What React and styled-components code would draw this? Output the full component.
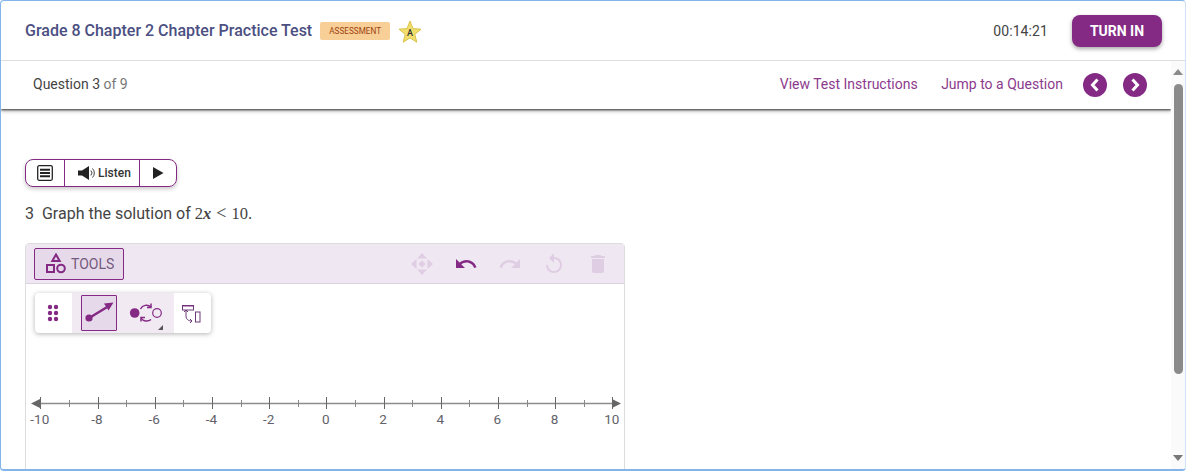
import React from "react";
import styled, { createGlobalStyle } from "styled-components";
import { MdUndo, MdRedo, MdReplay, MdDelete } from "react-icons/md";

const purple = "#842a85";

const Global = createGlobalStyle`
  html, body { margin: 0; padding: 0; background: #fff; overflow: hidden; }
  body { font-family: Roboto, "Liberation Sans", sans-serif; }
`;

const Frame = styled.div`
  box-sizing: border-box;
  width: 1186px;
  height: 471px;
  border: 1px solid #83b5ea;
  border-bottom-width: 2px;
  border-right-color: #cfe2f6;
  border-radius: 4px;
  display: flex;
  flex-direction: column;
  overflow: hidden;
  background: #fff;
`;

const TopBar = styled.header`
  flex: 0 0 59px;
  display: flex;
  align-items: center;
  padding: 0 23px 0 24px;
  border-bottom: 1px solid #dedede;
`;

const Title = styled.h1`
  margin: 0;
  font-size: 16px;
  font-weight: 500;
  color: #4b4f82;
`;

const Badge = styled.span`
  margin-left: 8px;
  width: 70px;
  height: 18px;
  display: flex;
  align-items: center;
  justify-content: center;
  background: #f7cf97;
  border-radius: 2px;
  color: #a0430f;
  font-size: 8.2px;
`;

const StarBox = styled.svg`
  margin-left: 8px;
  margin-top: 2px;
`;

const Timer = styled.span`
  margin-left: auto;
  font-size: 14px;
  color: #444;
  letter-spacing: 0.1px;
`;

const TurnIn = styled.button`
  margin-left: 24px;
  width: 90px;
  height: 32px;
  border: 0;
  border-radius: 8px;
  background: ${purple};
  color: #fff;
  font: 700 14px Roboto, sans-serif;
  box-shadow: 0 2px 4px rgba(0, 0, 0, 0.35);
`;

const Body = styled.div`
  flex: 1;
  display: flex;
  min-height: 0;
`;

const Main = styled.main`
  flex: 1;
  min-width: 0;
  display: flex;
  flex-direction: column;
`;

const SubBar = styled.div`
  box-sizing: border-box;
  flex: 0 0 48px;
  display: flex;
  align-items: center;
  padding: 0 23px 0 32px;
  box-shadow: 0 1px 2px #444, 0 2px 4px rgba(0, 0, 0, 0.3);
  clip-path: inset(0 0 -8px 0);
  position: relative;
`;

const Count = styled.span`
  font-size: 14px;
  color: #444;
  margin-bottom: 2px;
  span { color: #777; }
`;

const TextLink = styled.a`
  font-size: 14px;
  color: #8c3a8e;
  margin-bottom: 2px;
  margin-left: ${p => p.$gap}px;
`;

const RoundBtn = styled.span`
  width: 24px;
  height: 24px;
  border-radius: 50%;
  background: ${purple};
  margin-left: ${p => p.$gap}px;
  display: flex;
  align-items: center;
  justify-content: center;
`;

const Content = styled.div`
  flex: 1;
  min-height: 0;
  overflow: hidden;
  padding: 50px 0 0 24px;
`;

const ReadBar = styled.div`
  box-sizing: border-box;
  width: 152px;
  height: 28px;
  display: flex;
  align-items: stretch;
  border: 1px solid ${purple};
  border-radius: 8px;
  box-shadow: 0 2px 4px rgba(0, 0, 0, 0.22);
`;

const ReadCell = styled.div`
  box-sizing: border-box;
  width: ${p => p.$w}px;
  padding-left: ${p => p.$pad || 0}px;
  display: flex;
  align-items: center;
  justify-content: center;
  gap: 3px;
  font-size: 12px;
  font-weight: 500;
  color: #333;
  & + & { border-left: 1px solid ${purple}; }
`;

const QuestionText = styled.p`
  margin: 17px 0 0;
  height: 20px;
  font-size: 16px;
  line-height: 20px;
  color: #444;
  white-space: pre;
`;

const MathText = styled.span`
  font-family: "Liberation Serif", serif;
  font-size: 16.5px;
  line-height: 0;
  i { font-style: italic; font-weight: 700; }
  b { font-weight: 400; font-size: 18px; line-height: 0; margin: 0 5px; }
`;

const Graph = styled.section`
  box-sizing: border-box;
  width: 600px;
  height: 300px;
  margin-top: 19px;
  border: 1px solid #dcdcdc;
  border-radius: 4px 4px 0 0;
`;

const GraphHead = styled.div`
  box-sizing: border-box;
  height: 40px;
  padding: 4px 8px;
  display: flex;
  align-items: flex-start;
  background: #efe7f1;
  border-bottom: 1px solid #dccfe0;
`;

const ToolsBtn = styled.div`
  box-sizing: border-box;
  width: 90px;
  height: 32px;
  display: flex;
  align-items: center;
  gap: 5px;
  padding-left: 11px;
  background: #e6d9e9;
  border: 1px solid ${purple};
  border-radius: 2px;
  font-size: 14px;
  color: #755a80;
`;

const Actions = styled.div`
  margin-left: auto;
  height: 32px;
  display: flex;
  align-items: center;
  gap: 20px;
  padding-right: 6px;
`;

const ActionIcon = styled.span`
  width: 24px;
  height: 24px;
  display: flex;
  align-items: center;
  justify-content: center;
  font-size: 24px;
  color: ${p => (p.$on ? purple : "#dfcde4")};
`;

const Board = styled.div`
  position: relative;
  padding-top: 100px;
`;

const FloatTools = styled.div`
  position: absolute;
  left: 9px;
  top: 9px;
  width: 176px;
  height: 40px;
  display: flex;
  background: #fff;
  border-radius: 4px;
  box-shadow: 0 1px 5px rgba(0, 0, 0, 0.3);
`;

const ToolSlot = styled.div`
  box-sizing: border-box;
  width: ${p => p.$w}px;
  display: flex;
  align-items: center;
  padding-left: ${p => p.$pad}px;
  background: ${p => (p.$tint ? "#f1eaf3" : "transparent")};
`;

const ToolBtn = styled.div`
  position: relative;
  box-sizing: border-box;
  width: 36px;
  height: 36px;
  display: flex;
  align-items: center;
  justify-content: center;
  background: ${p => (p.$on ? "#e6d9e9" : "transparent")};
  border: 1px solid ${p => (p.$on ? purple : "transparent")};
  border-radius: 1px;
`;

const SwapIcon = styled.svg`
  margin-left: 11px;
`;

const CornerMark = styled.svg`
  align-self: flex-end;
  margin: 0 0 3px -6px;
`;

const LineSvg = styled.svg`
  display: block;
`;

const ScrollBar = styled.div`
  flex: 0 0 14px;
  background: #fafafa;
  display: flex;
  flex-direction: column;
  align-items: center;
  padding-top: 8px;
`;

const Thumb = styled.div`
  width: 9px;
  height: 290px;
  margin: 9px 0 81px;
  border-radius: 5px;
  background: #8a8a8a;
`;

function NumberLine() {
  const x0 = 14.3;
  const step = 28.6;
  const ticks = Array.from({ length: 21 }, (_, i) => i);
  return (
    <LineSvg width="598" height="60" viewBox="0 0 598 60">
      <line x1="12" x2="590" y1="19.5" y2="19.5" stroke="#8d8d8d" strokeWidth="1.5" />
      <path d="M5 19.5l9-4.5v9z" fill="#666" />
      <path d="M595 19.5l-9-4.5v9z" fill="#666" />
      {ticks.map(i => {
        const x = Math.round(x0 + i * step) + 0.5;
        const big = i % 2 === 0;
        return <line key={i} x1={x} x2={x} y1={big ? 13 : 16} y2={big ? 25 : 23} stroke={big ? "#666" : "#888"} strokeWidth="1" />;
      })}
      {ticks.filter(i => i % 2 === 0).map(i => (
        <text key={i} x={x0 + i * step - 0.5} y="40" textAnchor="middle" fontSize="13.5" fill="#62626a" fontFamily="Roboto, sans-serif">
          {i - 10}
        </text>
      ))}
    </LineSvg>
  );
}

export default function App() {
  return (
    <>
      <Global />
      <Frame>
        <TopBar>
          <Title>Grade 8 Chapter 2 Chapter Practice Test</Title>
          <Badge>ASSESSMENT</Badge>
          <StarBox width="24" height="23" viewBox="0 0 24 23">
            <path d="M12 1l3 7.600 8 .6-6.200 5.100 2 7.900L12 17.900 5.200 22.200l2-7.900L1 9.200l8-.6z" fill="#f2de6c" stroke="#d9c24a" strokeWidth="1" />
            <text x="12" y="16" textAnchor="middle" fontSize="9" fontWeight="500" fill="#333" fontFamily="Roboto, sans-serif">A</text>
          </StarBox>
          <Timer>00:14:21</Timer>
          <TurnIn>TURN IN</TurnIn>
        </TopBar>
        <Body>
          <Main>
            <SubBar>
              <Count>Question 3 <span>of 9</span></Count>
              <TextLink $gap={652}>View Test Instructions</TextLink>
              <TextLink $gap={23.5}>Jump to a Question</TextLink>
              <RoundBtn $gap={20.5}>
                <svg width="12" height="14" viewBox="0 0 12 14"><path d="M8.500 1.500L3.500 7l5 5.500" fill="none" stroke="#fff" strokeWidth="3" /></svg>
              </RoundBtn>
              <RoundBtn $gap={16}>
                <svg width="12" height="14" viewBox="0 0 12 14"><path d="M3.500 1.500L8.500 7l-5 5.500" fill="none" stroke="#fff" strokeWidth="3" /></svg>
              </RoundBtn>
            </SubBar>
            <Content>
              <ReadBar>
                <ReadCell $w={38}>
                  <svg width="16" height="16" viewBox="0 0 16 16">
                    <rect x="0.700" y="0.700" width="14.600" height="14.600" rx="1.500" fill="none" stroke="#222" strokeWidth="1.300" />
                    <path d="M3 4.800h10M3 8h10M3 11.200h10" stroke="#222" strokeWidth="2" />
                  </svg>
                </ReadCell>
                <ReadCell $w={75} $pad={5}>
                  <svg width="17" height="14" viewBox="0 0 17 14">
                    <path d="M0 4.500h4L11 0v14L4 9.500H0z" fill="#222" />
                    <path d="M12.800 4.500a3.500 3.500 0 0 1 0 5M14.500 2.500a6.500 6.500 0 0 1 0 9" fill="none" stroke="#444" strokeWidth="1" />
                  </svg>
                  Listen
                </ReadCell>
                <ReadCell $w={37}>
                  <svg width="12" height="12" viewBox="0 0 12 12"><path d="M1 0l10.500 6L1 12z" fill="#222" /></svg>
                </ReadCell>
              </ReadBar>
              <QuestionText>
                3  Graph the solution of <MathText>2<i>x</i><b>&lt;</b>10.</MathText>
              </QuestionText>
              <Graph>
                <GraphHead>
                  <ToolsBtn>
                    <svg width="20" height="22" viewBox="0 0 20 22" fill="none" stroke={purple} strokeWidth="2">
                      <path d="M10 1.500l3.700 6.500H6.300z" />
                      <rect x="1" y="12" width="7" height="7" />
                      <circle cx="15" cy="15.500" r="3.800" />
                    </svg>
                    TOOLS
                  </ToolsBtn>
                  <Actions>
                    <ActionIcon>
                      <svg width="22" height="22" viewBox="0 0 22 22" fill="#dfcde4">
                        <path d="M11 0l5 5.500H6zM11 22l-5-5.500h10zM0 11l5.500-5v10zM22 11l-5.500 5V6z" />
                        <path d="M11 7.500l3.500 3.500-3.500 3.500L7.500 11z" />
                      </svg>
                    </ActionIcon>
                    <ActionIcon $on><MdUndo /></ActionIcon>
                    <ActionIcon><MdRedo /></ActionIcon>
                    <ActionIcon><MdReplay /></ActionIcon>
                    <ActionIcon><MdDelete /></ActionIcon>
                  </Actions>
                </GraphHead>
                <Board>
                  <FloatTools>
                    <ToolSlot $w={37} $pad={0}>
                      <svg width="37" height="22" viewBox="0 0 37 22" fill={purple}>
                        <circle cx="15" cy="5" r="2.200" /><circle cx="21" cy="5" r="2.200" />
                        <circle cx="15" cy="11" r="2.200" /><circle cx="21" cy="11" r="2.200" />
                        <circle cx="15" cy="17" r="2.200" /><circle cx="21" cy="17" r="2.200" />
                      </svg>
                    </ToolSlot>
                    <ToolSlot $w={102} $tint $pad={9}>
                      <ToolBtn $on>
                        <svg width="32" height="28" viewBox="0 0 32 28" fill="none">
                          <circle cx="6" cy="19" r="3.600" fill={purple} />
                          <path d="M7 18.500L25 7.500" stroke={purple} strokeWidth="2.500" />
                          <path d="M30.500 3.500l-9.500 1 4.500 7z" fill={purple} />
                        </svg>
                      </ToolBtn>
                      <SwapIcon width="36" height="24" viewBox="0 0 36 24" fill="none" stroke={purple} strokeWidth="1.500">
                        <circle cx="6.700" cy="12" r="4.800" fill={purple} stroke="none" />
                        <circle cx="29" cy="12" r="4.300" strokeWidth="1.200" />
                        <path d="M12.500 8c2-4 7-5 10.500-2M13 17c2 3.500 7 4 10 1.500" />
                        <path d="M23 2.500v4h-4M13 20.500v-4h4" />
                      </SwapIcon>
                      <CornerMark width="5" height="5" viewBox="0 0 5 5">
                        <path d="M5 0v5H0z" fill="#555" />
                      </CornerMark>
                    </ToolSlot>
                    <ToolSlot $w={37} $pad={8}>
                      <svg width="22" height="22" viewBox="0 0 22 22" fill="none" stroke="#6b3a76" strokeWidth="1">
                        <rect x="0.500" y="3.500" width="11" height="4.500" />
                        <path d="M0.500 4h11" stroke={purple} strokeWidth="1" />
                        <rect x="13.500" y="10" width="4.500" height="10" />
                        <path d="M4 8v6c0 3 2 5 6 5M2 10l2-2 2 2M8 17l2 2-2 2" />
                      </svg>
                    </ToolSlot>
                  </FloatTools>
                  <NumberLine />
                </Board>
              </Graph>
            </Content>
          </Main>
          <ScrollBar>
            <svg width="10" height="6" viewBox="0 0 10 6"><path d="M5 0l5 6H0z" fill="#8a8a8a" /></svg>
            <Thumb />
            <svg width="10" height="6" viewBox="0 0 10 6"><path d="M5 6L0 0h10z" fill="#777" /></svg>
          </ScrollBar>
        </Body>
      </Frame>
    </>
  );
}
